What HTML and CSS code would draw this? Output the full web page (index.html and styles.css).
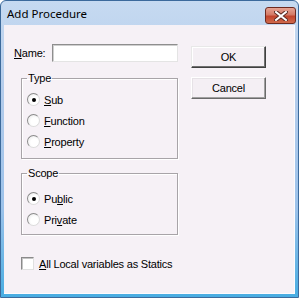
FILE: index.html
```html
<!DOCTYPE html>
<html lang="en">
  <head>
    <title>Add Procedure</title>
    <link rel="stylesheet" href="styles.css">
  </head>
  <body>
    <div class="window">
      <div class="titlebar">
        <span class="title">Add Procedure</span>
        <div class="close-btn">
          <svg width="14" height="10" viewBox="0 0 14 10">
            <path d="M2 1 L12 9 M12 1 L2 9" stroke="#5a2a22" stroke-width="4" stroke-linecap="square" />
            <path d="M2 1 L12 9 M12 1 L2 9" stroke="#ffffff" stroke-width="2" stroke-linecap="square" />
          </svg>
        </div>
      </div>

      <div class="client">
        <div class="main-col">
          <div class="name-row">
            <label class="name-label"><u>N</u>ame:</label>
            <input type="text" class="name-input" />
          </div>

          <fieldset class="group type-group">
            <legend>Type</legend>
            <div class="option"><span class="radio checked"></span><span><u>S</u>ub</span></div>
            <div class="option"><span class="radio"></span><span><u>F</u>unction</span></div>
            <div class="option"><span class="radio"></span><span><u>P</u>roperty</span></div>
          </fieldset>

          <fieldset class="group scope-group">
            <legend>Scope</legend>
            <div class="option"><span class="radio checked"></span><span>Pu<u>b</u>lic</span></div>
            <div class="option"><span class="radio"></span><span>Pri<u>v</u>ate</span></div>
          </fieldset>

          <div class="check-row">
            <span class="checkbox"></span>
            <span><u>A</u>ll Local variables as Statics</span>
          </div>
        </div>

        <div class="side-col">
          <div class="btn default">OK</div>
          <div class="btn">Cancel</div>
        </div>
      </div>
    </div>
  </body>
</html>
```

FILE: styles.css
```css
body {
  margin: 0;
  padding: 0;
  font-family: "Liberation Sans", Arial, sans-serif;
  font-size: 11px;
  letter-spacing: -0.2px;
  color: #000;
  background: #fff;
}

.window {
  width: 299px;
  height: 298px;
  box-sizing: border-box;
  border: 1px solid #3c6a9c;
  border-radius: 6px 6px 0 0;
  padding: 0 3px 3px 3px;
  background: linear-gradient(#c6daf1, #b4cceb 30%, #9cc2ea 70%, #48ade2);
  display: flex;
  flex-direction: column;
}

.titlebar {
  height: 24px;
  display: flex;
  align-items: center;
  justify-content: space-between;
  padding-left: 3px;
}

.title {
  font-family: "Noto Sans", sans-serif;
  font-size: 11.5px;
  letter-spacing: 0;
  color: #000;
  margin-top: 1px;
}

.close-btn {
  width: 29px;
  height: 15px;
  margin-top: 5px;
  margin-right: -1px;
  border: 1px solid #6e2a20;
  border-radius: 3px;
  background: linear-gradient(#e6a494, #d47a66 45%, #c2442c 55%, #d06a4c);
  display: flex;
  align-items: center;
  justify-content: center;
}

.client {
  flex: 1;
  background: #f6f1f6;
  border-right: 1px solid #fdfbfd;
  border-bottom: 1px solid #fdfbfd;
  display: flex;
}

.main-col {
  width: 164px;
  padding: 19px 0 0 10px;
}

.name-row {
  display: flex;
  align-items: center;
  gap: 7px;
}

.name-input {
  width: 126px;
  height: 18px;
  box-sizing: border-box;
  margin: 0;
  border: 1px solid;
  border-color: #8e8e8e #e4e4e4 #e4e4e4 #8e8e8e;
  box-shadow: inset 1px 1px 0 #cfcfcf;
  background: #fff;
  outline: none;
}

.group {
  margin: 0 0 0 7px;
  width: 157px;
  box-sizing: border-box;
  border: 1px solid #a8a4a8;
  box-shadow: inset 1px 1px 0 #fff, 1px 1px 0 #fff;
  padding: 0 0 0 5px;
  min-width: 0;
}

.group legend {
  padding: 0 1px;
  line-height: 13px;
}

.type-group {
  margin-top: 10px;
  padding-top: 4px;
  padding-bottom: 6px;
}

.scope-group {
  margin-top: 8px;
  padding-top: 8px;
  padding-bottom: 4px;
}

.option {
  height: 21px;
  display: flex;
  align-items: center;
  gap: 4px;
}

.radio {
  width: 13px;
  height: 13px;
  box-sizing: border-box;
  border-radius: 50%;
  border: 1px solid;
  border-color: #8a8a8a #dcdcdc #dcdcdc #8a8a8a;
  background: radial-gradient(circle at 60% 60%, #fff 40%, #e4e4e4);
  display: flex;
  align-items: center;
  justify-content: center;
}

.radio.checked::after {
  content: "";
  width: 4px;
  height: 4px;
  border-radius: 50%;
  background: #000;
}

.check-row {
  margin: 22px 0 0 7px;
  display: flex;
  align-items: center;
  gap: 5px;
  white-space: nowrap;
}

.checkbox {
  width: 13px;
  height: 13px;
  box-sizing: border-box;
  border: 1px solid;
  border-color: #8a8a8a #e0e0e0 #e0e0e0 #8a8a8a;
  box-shadow: inset 1px 1px 0 #c4c4c4;
  background: #fff;
}

.side-col {
  padding: 21px 0 0 13px;
  display: flex;
  flex-direction: column;
  gap: 9px;
}

.btn {
  width: 75px;
  height: 22px;
  box-sizing: border-box;
  border: 1px solid;
  border-color: #fff #6a6a6a #6a6a6a #fff;
  box-shadow: inset -1px -1px 0 #a0a0a0, inset 1px 1px 0 #e6e2e6;
  background: #f4eff4;
  display: flex;
  align-items: center;
  justify-content: center;
}

.btn.default {
  border-color: #e8e8e8 #404040 #404040 #e8e8e8;
  box-shadow: inset -1px -1px 0 #707070, inset 1px 1px 0 #fff;
}
```
